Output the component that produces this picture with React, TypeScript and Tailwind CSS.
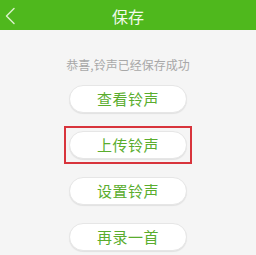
import { ReactNode } from "react";

function RingButton({ children, marked }: { children: ReactNode, marked?: boolean }) {
  return (
    <div className={marked ? "border-2 border-[#d8343c] p-[3px]" : "p-[5px]"}>
      <div className="flex w-[118px] h-[28px] items-center justify-center rounded-full bg-white border border-[#e6e6e6] shadow-[0_1px_1px_rgba(0,0,0,0.08)] text-[15px] text-[#5aad2e] tracking-[0.5px]">
        {children}
      </div>
    </div>
  )
}

export default function App() {
  return (
    <div className="flex flex-col w-[256px] h-[255px] bg-[#f5f5f5] overflow-hidden" style={{ fontFamily: '"Noto Sans CJK SC", "Noto Sans", sans-serif' }}>
      <div className="flex flex-row items-center h-[30px] bg-[#4fb81d] shrink-0">
        <div className="flex w-[30px] pl-[4px] pt-[1px]">
          <svg width="12" height="18" viewBox="0 0 12 18" fill="none">
            <path d="M10 1.5 L2.5 9 L10 16.5" stroke="#d8f0c8" strokeWidth="1.5" strokeLinecap="round" strokeLinejoin="round" />
          </svg>
        </div>
        <div className="flex-1 text-center text-[16px] leading-none text-[#f2faec] pt-[1px]">保存</div>
        <div className="w-[30px]"></div>
      </div>
      <div className="flex flex-col items-center">
        <div className="mt-[28px] text-[12px] leading-[14px] text-[#a8a8a8]">恭喜,铃声已经保存成功</div>
        <div className="flex flex-col items-center mt-[8px] gap-[8px]">
          <RingButton>查看铃声</RingButton>
          <RingButton marked>上传铃声</RingButton>
          <RingButton>设置铃声</RingButton>
          <RingButton>再录一首</RingButton>
        </div>
      </div>
    </div>
  )
}
